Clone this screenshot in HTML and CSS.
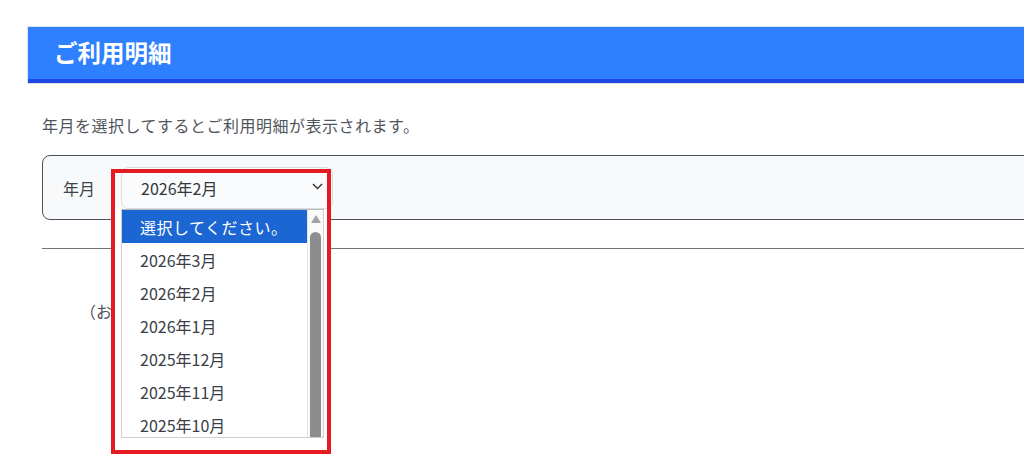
FILE: index.html
```html
<!DOCTYPE html>
<html lang="ja">
<head>
    <meta charset="UTF-8">
    <meta name="viewport" content="width=device-width, initial-scale=1.0">
    <title>ご利用明細</title>
    <link rel="stylesheet" href="styles.css">
</head>
<body>
    <div class="page">
        <h1 class="title">ご利用明細</h1>

        <p class="desc">年月を選択してするとご利用明細が表示されます。</p>

        <div class="panel">
            <label class="panel-label">年月</label>
            <div class="picker">
                <div class="select">
                    <span>2026年2月</span>
                    <svg class="chevron" width="11" height="7" viewBox="0 0 11 7">
                        <path d="M1 1 L5.5 5.5 L10 1" fill="none" stroke="#333" stroke-width="1.4"/>
                    </svg>
                </div>

                <!-- open option list -->
                <div class="popup">
                    <div class="list">
                        <ul class="options">
                            <li class="active">選択してください。</li>
                            <li>2026年3月</li>
                            <li>2026年2月</li>
                            <li>2026年1月</li>
                            <li>2025年12月</li>
                            <li>2025年11月</li>
                            <li>2025年10月</li>
                        </ul>
                        <div class="scrollbar">
                            <div class="arrow"></div>
                            <div class="thumb"></div>
                        </div>
                    </div>
                </div>

                <div class="mark"></div>
            </div>
        </div>

        <hr class="rule">

        <p class="note">（お客様へのお知らせ）</p>
    </div>
</body>
</html>
```

FILE: styles.css
```css
html, body { height: 100%; }
body {
    margin: 0;
    overflow: hidden;
    font-family: "Noto Sans CJK JP", "Noto Sans", sans-serif;
    color: #3a3e45;
    background: #fff;
}
.page { width: 1100px; height: 100%; padding: 27px 0 0 28px; box-sizing: border-box; }

.title {
    margin: 0;
    height: 52px;
    line-height: 50px;
    padding-left: 26px;
    font-size: 23.5px;
    font-weight: bold;
    color: #fff;
    background: #2e80ff;
    border-bottom: 4px solid #1e47e4;
    box-shadow: 0 0 0 1px #dde3ee;
}

.desc {
    margin: 30px 0 0 14px;
    font-size: 16px;
    letter-spacing: 0.5px;
    line-height: 24px;
    color: #50555c;
}

.panel {
    margin: 18px 0 0 14px;
    height: 63px;
    border: 1px solid #4b515b;
    border-radius: 8px;
    background: #f8f9fb;
    display: flex;
    align-items: center;
    padding-left: 20px;
}
.panel-label { font-size: 16px; width: 58px; color: #3f434a; }

.picker { position: relative; }
.select {
    width: 182px;
    height: 40px;
    padding: 0 9px 0 19px;
    border: 1px solid #dadde3;
    border-radius: 7px;
    background: #fafbfc;
    display: flex;
    align-items: center;
    justify-content: space-between;
    font-size: 16px;
    color: #33373d;
}
.chevron { margin-top: -2px; }

.popup {
    position: absolute;
    left: -6px;
    top: 42px;
    width: 212px;
    height: 241px;
    background: #fff;
    padding-left: 6px;
    box-sizing: border-box;
    z-index: 2;
}
.list {
    width: 203px;
    height: 229px;
    box-sizing: border-box;
    border: 1px solid #cfcfcf;
    border-top-color: #b9b9b9;
    display: flex;
    overflow: hidden;
}
.options {
    list-style: none;
    margin: 0;
    padding: 0;
    width: 185px;
    font-size: 16px;
    color: #3a3e45;
}
.options li { height: 33px; line-height: 34px; padding-left: 18px; }
.options li.active { background: #1b66d2; color: #fff; letter-spacing: 0.5px; }

.scrollbar {
    flex: 1;
    background: #fafafa;
    border-left: 1px solid #e6e6e6;
    display: flex;
    flex-direction: column;
    align-items: center;
}
.arrow {
    margin-top: 5px;
    width: 0;
    height: 0;
    border-left: 5px solid transparent;
    border-right: 5px solid transparent;
    border-bottom: 8px solid #a3a3a3;
}
.thumb {
    margin-top: 9px;
    width: 11px;
    flex: 1;
    background: #8d8d8d;
    border-radius: 6px 6px 0 0;
}

/* red annotation frame */
.mark {
    position: absolute;
    left: -10px;
    top: 2px;
    width: 212px;
    height: 277px;
    border: 4px solid #e41b20;
    z-index: 3;
    pointer-events: none;
}

.rule {
    margin: 28px 0 0 14px;
    border: 0;
    border-top: 1px solid #70757d;
}

.note {
    margin: 50px 0 0 52px;
    font-size: 16px;
    line-height: 24px;
    color: #50555c;
}
```
